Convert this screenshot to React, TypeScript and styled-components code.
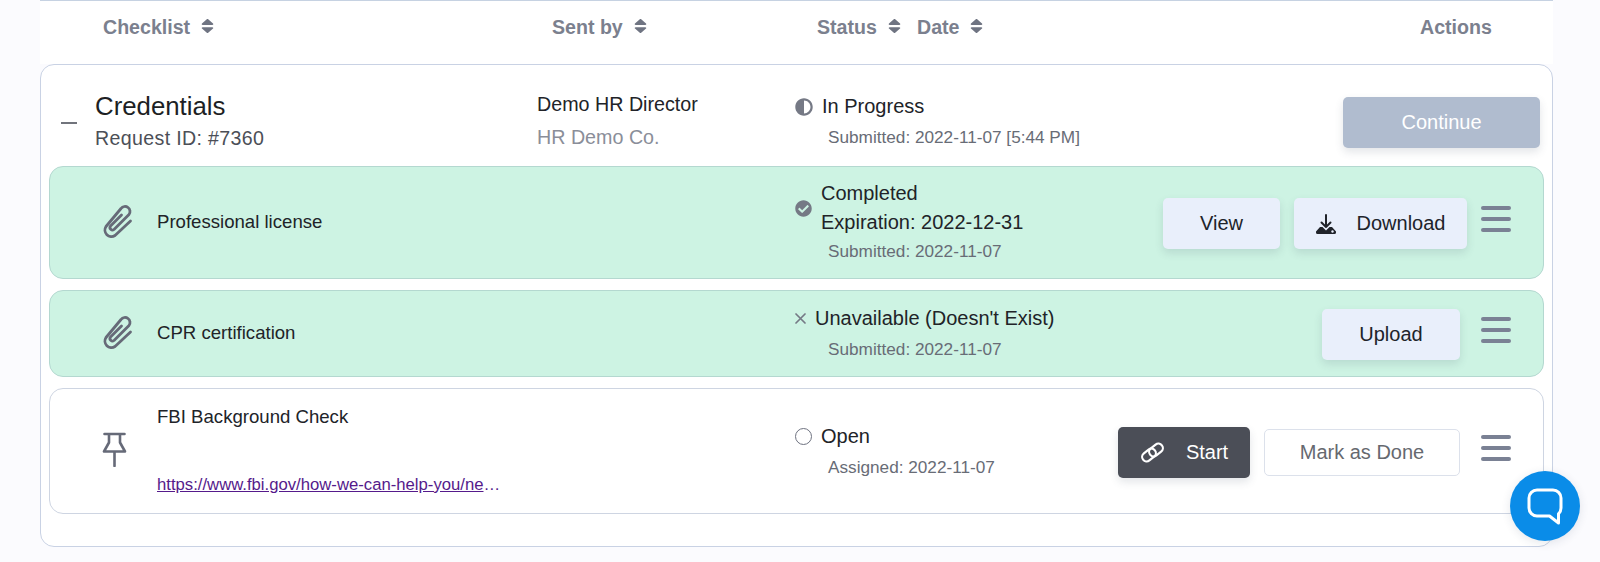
import { ReactNode } from "react";
import { FaSort, FaCheckCircle, FaAdjust } from "react-icons/fa";
import styled, { createGlobalStyle } from "styled-components";

const GlobalStyle = createGlobalStyle`
  html, body {
    margin: 0;
    height: 100%;
    overflow: hidden;
    background: #fbfbfe;
    font-family: "Liberation Sans", Arial, sans-serif;
  }
  * {
    box-sizing: border-box;
  }
`;

const Page = styled.div`
  width: 1513px;
  margin-left: 40px;
`;

const HeaderRow = styled.div`
  display: flex;
  align-items: center;
  height: 64px;
  padding-bottom: 10px;
  background: #fff;
  border-top: 1px solid #c6d2e2;
`;

const HeaderCell = styled.div<{ $width: number }>`
  display: flex;
  align-items: center;
  gap: 11px;
  flex: none;
  width: ${(p) => p.$width}px;
  font-size: 19.6px;
  font-weight: 700;
  color: #7b808e;
`;

const SortIcon = styled(FaSort)`
  width: 13px;
  height: 18px;
  margin-top: -3px;
  color: #6f7482;
`;

const Card = styled.div`
  height: 483px;
  padding: 0 8px;
  background: #fff;
  border: 1px solid #c9d2e4;
  border-radius: 14px;
`;

const CardHeader = styled.div`
  display: flex;
  align-items: center;
  height: 101px;
  padding: 11px 4px 0 0;
`;

const Toggle = styled.span`
  flex: none;
  width: 16px;
  height: 2px;
  margin: 4px 0 0 12px;
  background: #71747c;
`;

const TitleBlock = styled.div`
  width: 442px;
  margin-left: 18px;
`;

const Title = styled.div`
  font-size: 25.8px;
  line-height: 28px;
  color: #1d1f24;
`;

const Sub = styled.div`
  margin-top: 6px;
  font-size: 19.6px;
  line-height: 24px;
  letter-spacing: 0.35px;
  color: #4c4f57;
`;

const SenderBlock = styled.div`
  width: 258px;
  font-size: 19.7px;
  line-height: 33px;
  color: #212328;
`;

const Company = styled.div`
  color: #8a8e99;
`;

const StatusBlock = styled.div<{ $lift?: number }>`
  display: flex;
  flex-direction: column;
  margin-top: ${(p) => -(p.$lift ?? 0)}px;
  font-size: 20px;
  color: #212328;
`;

const StatusLine = styled.div`
  display: flex;
  align-items: center;
  gap: 9px;
  height: 29px;
  white-space: nowrap;
`;

const StatusIconSlot = styled.span`
  display: inline-flex;
  color: #757985;
`;

const EmptyCircle = styled.span`
  width: 17px;
  height: 17px;
  border: 1.5px solid #6e7280;
  border-radius: 50%;
`;

const StackedLines = styled.div`
  display: flex;
  align-items: center;
  gap: 9px;
`;

const StackedText = styled.div`
  line-height: 29px;
  white-space: nowrap;
`;

const Meta = styled.div<{ $tight?: boolean }>`
  margin: ${(p) => (p.$tight ? 1 : 3)}px 0 0 33px;
  font-size: 17.2px;
  line-height: 26px;
  white-space: nowrap;
  color: #686c76;
`;

const Actions = styled.div`
  display: flex;
  align-items: center;
  gap: 14px;
  margin: 2px 0 0 auto;
`;

const Button = styled.button<{ $width: number; $variant?: "light" | "dark" | "muted" | "outline" }>`
  display: flex;
  align-items: center;
  justify-content: center;
  gap: 21px;
  width: ${(p) => p.$width}px;
  height: ${(p) => (p.$variant === "outline" ? 47 : 51)}px;
  padding: 0;
  font-family: inherit;
  font-size: 20px;
  border-radius: 5px;
  border: ${(p) => (p.$variant === "outline" ? "1px solid #dce1eb" : "none")};
  color: ${(p) =>
    p.$variant === "dark" || p.$variant === "muted"
      ? "#fff"
      : p.$variant === "outline"
        ? "#66696f"
        : "#20232a"};
  background: ${(p) =>
    p.$variant === "dark"
      ? "#4b4e57"
      : p.$variant === "muted"
        ? "#b0bccf"
        : p.$variant === "outline"
          ? "#fff"
          : "#e9effb"};
  box-shadow: ${(p) => (p.$variant === "outline" ? "none" : "0 4px 8px rgba(60, 70, 90, 0.14)")};
`;

const MenuButton = styled.div<{ $inset: number }>`
  display: flex;
  flex-direction: column;
  gap: 7px;
  width: 30px;
  margin: -9px 32px 0 ${(p) => p.$inset}px;

  span {
    height: 4px;
    border-radius: 2px;
    background: #7a8194;
  }
`;

const Row = styled.div<{ $done?: boolean; $height: number; $gapAfter: number }>`
  display: flex;
  align-items: center;
  height: ${(p) => p.$height}px;
  margin-bottom: ${(p) => p.$gapAfter}px;
  border: 1px solid ${(p) => (p.$done ? "#b4d8d0" : "#ced5e2")};
  border-radius: 14px;
  background: ${(p) => (p.$done ? "#cdf3e3" : "#fff")};
`;

const ItemIcon = styled.span`
  display: inline-flex;
  flex: none;
  width: 107px;
  margin-top: -4px;
  padding-left: 52px;
`;

const ItemName = styled.div`
  flex: none;
  width: 638px;
  margin-top: -2px;
  font-size: 18.6px;
  color: #212328;
`;

const ItemColumn = styled.div`
  display: flex;
  flex: none;
  flex-direction: column;
  justify-content: space-between;
  width: 638px;
  height: 89px;
  margin-top: -2px;
  font-size: 18.6px;
  color: #212328;
`;

const ExternalLink = styled.a`
  display: block;
  width: 347px;
  overflow: hidden;
  white-space: nowrap;
  text-overflow: ellipsis;
  font-size: 16.7px;
  line-height: 20px;
  color: #551a8b;
  text-decoration: underline;
`;

const ChatBubble = styled.div`
  position: fixed;
  left: 1510px;
  top: 471px;
  display: flex;
  align-items: center;
  justify-content: center;
  width: 70px;
  height: 70px;
  border-radius: 50%;
  background: #0a8ce8;
  box-shadow: 0 2px 10px rgba(40, 60, 90, 0.12);
`;

function Menu({ inset = 0 }: { inset?: number }) {
  return (
    <MenuButton $inset={inset}>
      <span />
      <span />
      <span />
    </MenuButton>
  );
}

function ClipGlyph() {
  return (
    <svg width="31" height="36" viewBox="0 0 31 36" fill="none">
      <path
        d="M28.500 18L13 32.500A6.500 6.500 0 0 1 4 23.500L19 5.500A5 5 0 0 1 27 11.500L12 26.500A2.500 2.500 0 0 1 8.500 23L19.500 12"
        stroke="#666a78"
        strokeWidth="2.8"
        strokeLinecap="round"
        strokeLinejoin="round"
      />
    </svg>
  );
}

function PinGlyph() {
  return (
    <svg width="25" height="35" viewBox="0 0 25 35" fill="none">
      <path
        d="M2.500 2h20M7 2v8.500L2 19.500h21l-5-9V2M12.500 19.500V34"
        stroke="#666a78"
        strokeWidth="2.6"
        strokeLinecap="round"
        strokeLinejoin="round"
      />
    </svg>
  );
}

function DownloadGlyph() {
  return (
    <svg width="20" height="20" viewBox="0 0 20 20" fill="none">
      <path d="M10 1v12M5.500 8.500L10 13l4.500-4.500" stroke="#20232a" strokeWidth="2" strokeLinecap="round" strokeLinejoin="round" />
      <path
        d="M4 13h2.500L10 16.500 13.500 13H16l4 4.500v1A1.500 1.500 0 0 1 18.500 20h-17A1.500 1.500 0 0 1 0 18.500v-1z"
        fill="#20232a"
      />
      <circle cx="16.500" cy="17.500" r="1.200" fill="#e9effb" />
    </svg>
  );
}

function ChainGlyph() {
  return (
    <svg width="25" height="21" viewBox="0 0 25 21" fill="none">
      <rect x="1.500" y="8.500" width="15" height="9" rx="4.500" transform="rotate(-38 9 13)" stroke="#fff" strokeWidth="2.200" />
      <rect x="8.500" y="3.500" width="15" height="9" rx="4.500" transform="rotate(-38 16 8)" stroke="#fff" strokeWidth="2.200" />
    </svg>
  );
}

function CrossGlyph() {
  return (
    <svg width="11" height="11" viewBox="0 0 11 11" fill="none">
      <path d="M1 1l9 9M10 1l-9 9" stroke="#757985" strokeWidth="1.700" strokeLinecap="round" />
    </svg>
  );
}

function ChatGlyph() {
  return (
    <svg width="36" height="37" viewBox="0 0 36 37" fill="none">
      <path
        d="M10 2h16a8 8 0 0 1 8 8v10a8 8 0 0 1-2.500 5.800V35l-9-7H10a8 8 0 0 1-8-8V10a8 8 0 0 1 8-8z"
        stroke="#fff"
        strokeWidth="3"
        strokeLinejoin="round"
      />
    </svg>
  );
}

function Sortable({ label, width }: { label: string; width: number }) {
  return (
    <HeaderCell $width={width}>
      {label}
      <SortIcon preserveAspectRatio="none" />
    </HeaderCell>
  );
}

function Status({ icon, children }: { icon: ReactNode; children: ReactNode }) {
  return (
    <StatusLine>
      <StatusIconSlot>{icon}</StatusIconSlot>
      {children}
    </StatusLine>
  );
}

export default function App() {
  return (
    <>
      <GlobalStyle />
      <Page>
        <HeaderRow>
          <HeaderCell $width={63} />
          <Sortable label="Checklist" width={449} />
          <Sortable label="Sent by" width={265} />
          <Sortable label="Status" width={100} />
          <Sortable label="Date" width={503} />
          <HeaderCell $width={80}>Actions</HeaderCell>
        </HeaderRow>
        <Card>
          <CardHeader>
            <Toggle />
            <TitleBlock>
              <Title>Credentials</Title>
              <Sub>Request ID: #7360</Sub>
            </TitleBlock>
            <SenderBlock>
              Demo HR Director
              <Company>HR Demo Co.</Company>
            </SenderBlock>
            <StatusBlock>
              <Status icon={<FaAdjust size={18} />}>In Progress</Status>
              <Meta>Submitted: 2022-11-07 [5:44 PM]</Meta>
            </StatusBlock>
            <Actions>
              <Button $width={197} $variant="muted">
                Continue
              </Button>
            </Actions>
          </CardHeader>

          <Row $done $height={113} $gapAfter={11}>
            <ItemIcon>
              <ClipGlyph />
            </ItemIcon>
            <ItemName>Professional license</ItemName>
            <StatusBlock $lift={2}>
              <StackedLines>
                <StatusIconSlot>
                  <FaCheckCircle size={17} />
                </StatusIconSlot>
                <StackedText>
                  Completed
                  <br />
                  Expiration: 2022-12-31
                </StackedText>
              </StackedLines>
              <Meta $tight>Submitted: 2022-11-07</Meta>
            </StatusBlock>
            <Actions>
              <Button $width={117}>View</Button>
              <Button $width={173}>
                <DownloadGlyph />
                Download
              </Button>
              <Menu />
            </Actions>
          </Row>

          <Row $done $height={87} $gapAfter={11}>
            <ItemIcon>
              <ClipGlyph />
            </ItemIcon>
            <ItemName>CPR certification</ItemName>
            <StatusBlock $lift={1}>
              <Status icon={<CrossGlyph />}>Unavailable (Doesn't Exist)</Status>
              <Meta>Submitted: 2022-11-07</Meta>
            </StatusBlock>
            <Actions>
              <Button $width={138}>Upload</Button>
              <Menu inset={7} />
            </Actions>
          </Row>

          <Row $height={126} $gapAfter={0}>
            <ItemIcon>
              <PinGlyph />
            </ItemIcon>
            <ItemColumn>
              FBI Background Check
              <ExternalLink href="#">https://www.fbi.gov/how-we-can-help-you/need-an-fbi-service-or-more-information</ExternalLink>
            </ItemColumn>
            <StatusBlock>
              <Status icon={<EmptyCircle />}>Open</Status>
              <Meta>Assigned: 2022-11-07</Meta>
            </StatusBlock>
            <Actions>
              <Button $width={132} $variant="dark">
                <ChainGlyph />
                Start
              </Button>
              <Button $width={196} $variant="outline">
                Mark as Done
              </Button>
              <Menu inset={7} />
            </Actions>
          </Row>
        </Card>
      </Page>
      <ChatBubble>
        <ChatGlyph />
      </ChatBubble>
    </>
  );
}
